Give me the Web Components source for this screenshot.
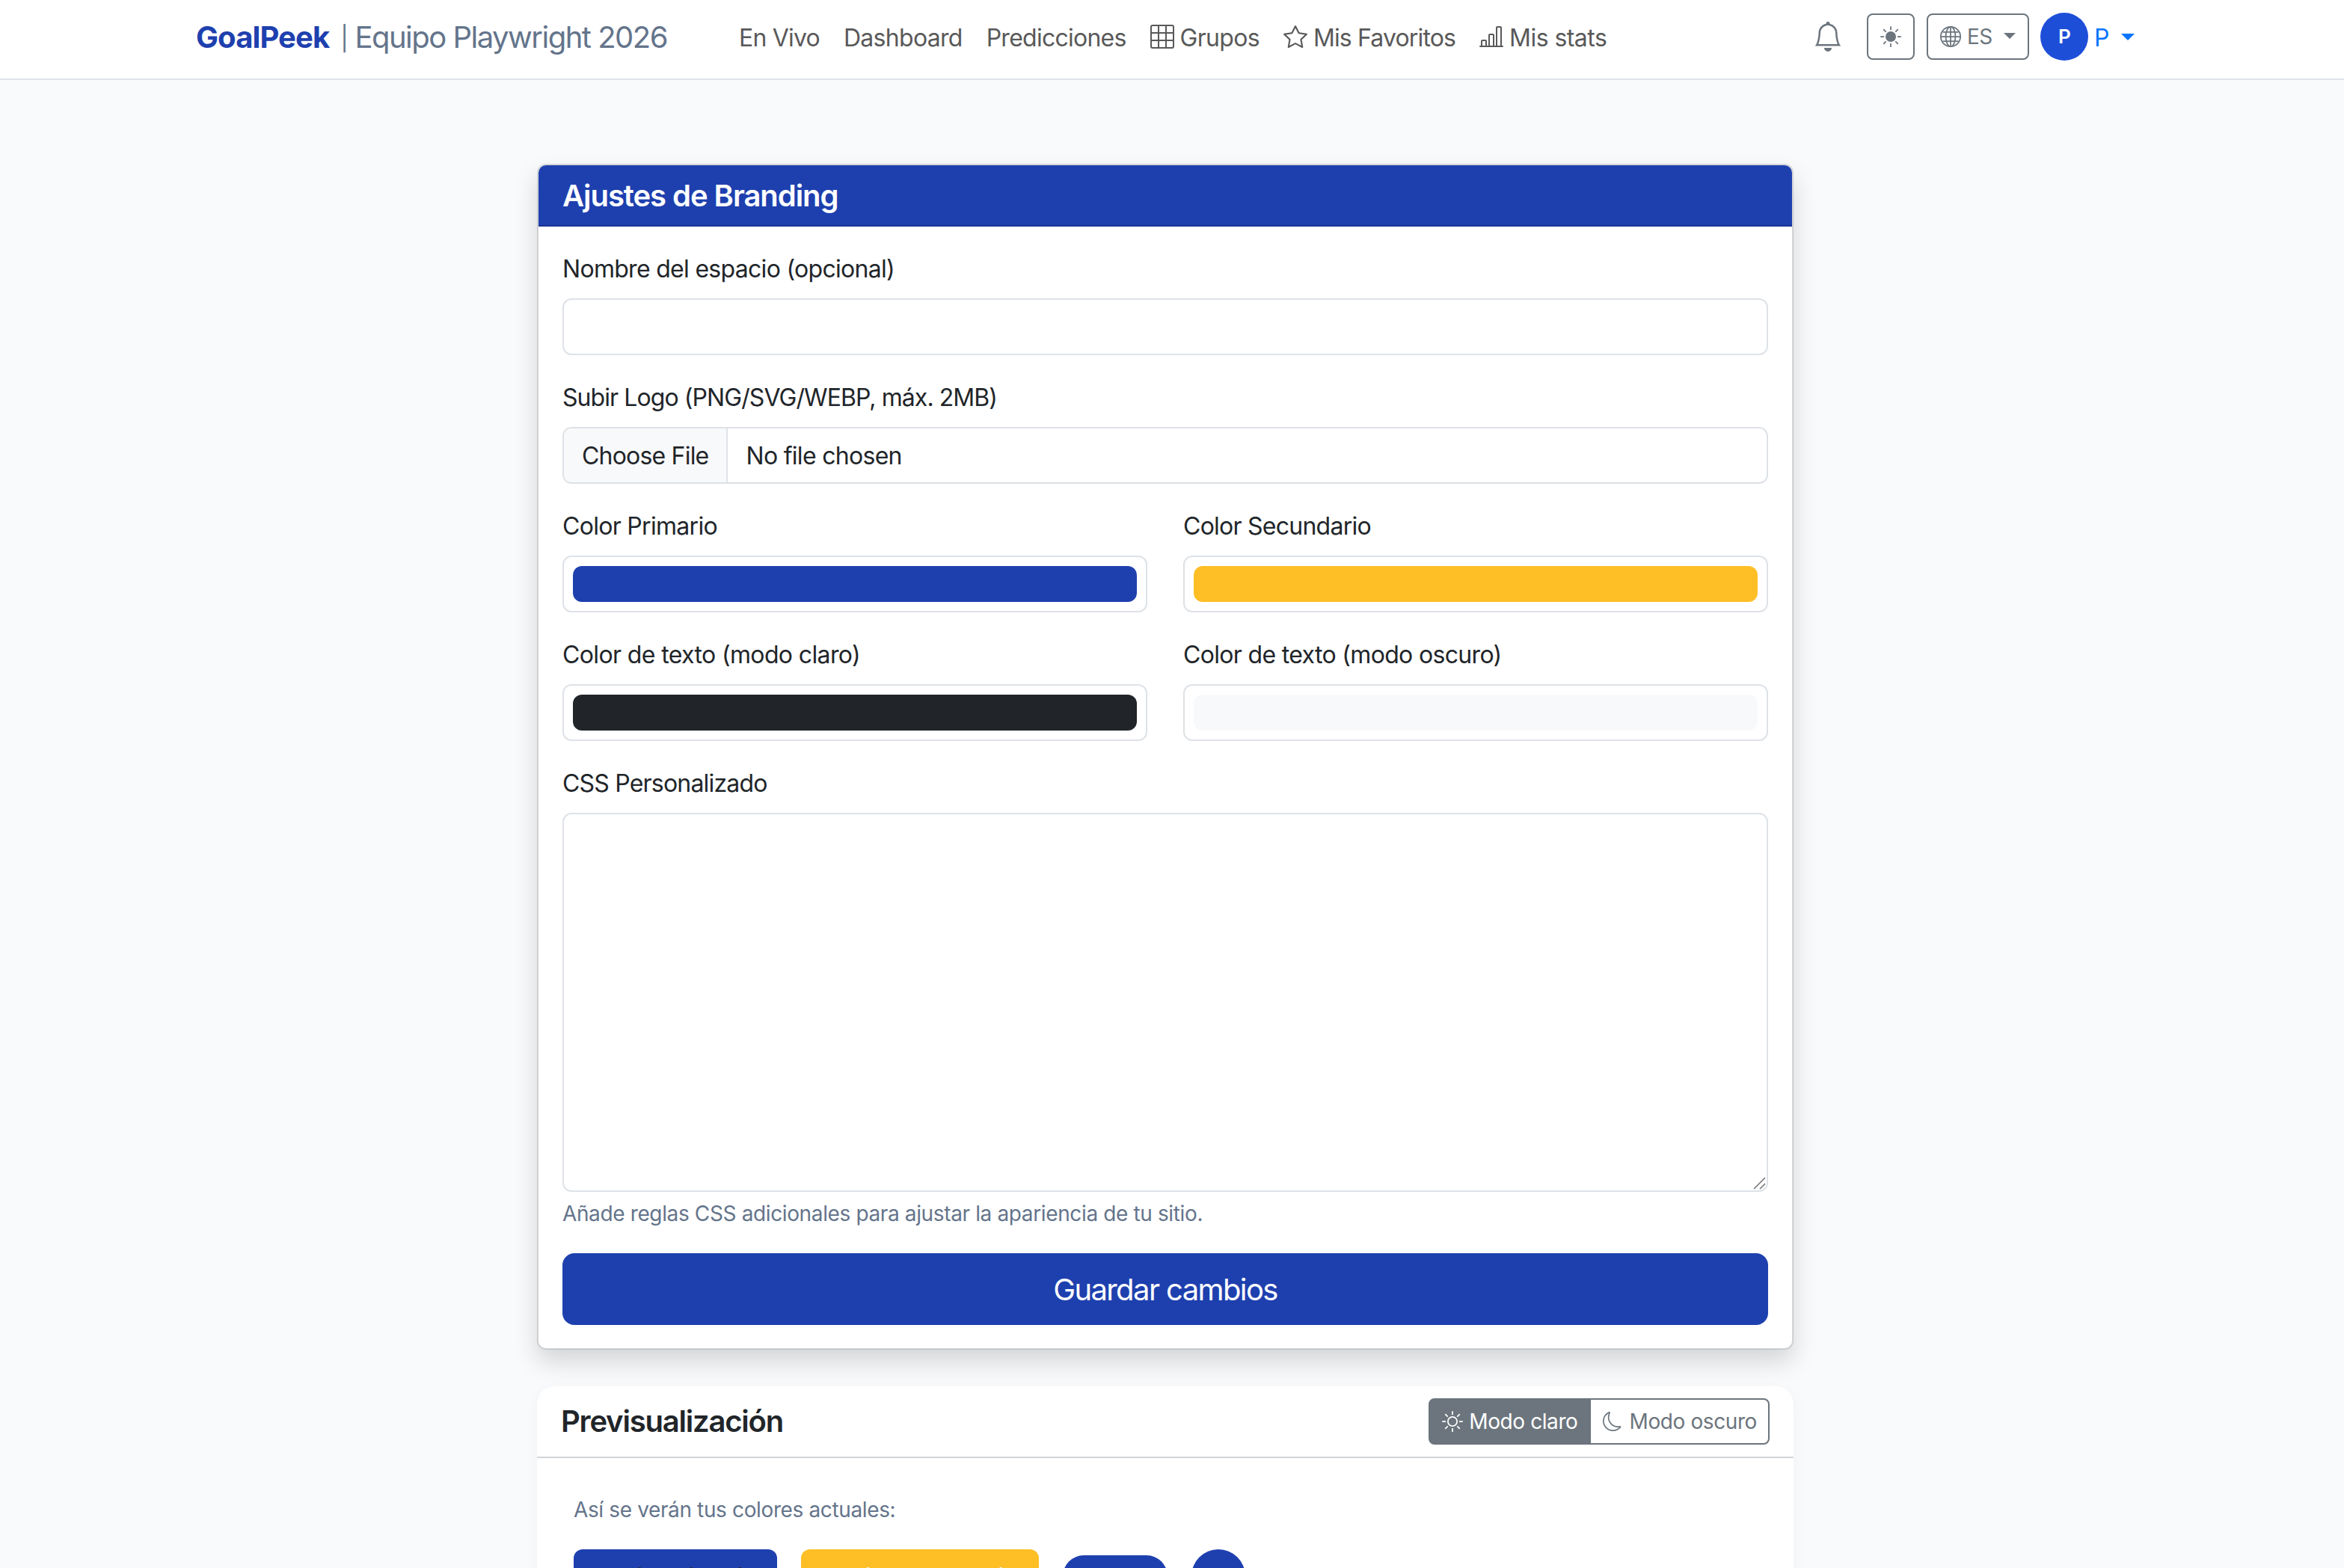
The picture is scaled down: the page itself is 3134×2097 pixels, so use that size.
<!DOCTYPE html>
<html lang="es">
<head>
    <meta charset="utf-8">
    <title>GoalPeek | Ajustes de Branding</title>
    <style>
        html, body {
            margin: 0;
            height: 100%;
            overflow: hidden;
        }

        body {
            --primary: #1e40af;
            --secondary: #febf26;
            --muted: #64748b;
            --gray: #6c757d;
            --border: #dee2e6;
            background-color: #f8fafc;
            color: #212529;
            font-family: Inter, "Liberation Sans", sans-serif;
            font-size: 32px;
            line-height: 48px;
            letter-spacing: -0.7px;
        }

        main {
            display: flex;
            flex-direction: column;
            gap: 49px;
            width: 1680px;
            margin: 112px 0 0 718px;
        }

        .row {
            display: grid;
            grid-template-columns: 1fr 1fr;
            gap: 48px;
        }
    </style>
</head>
<body>
    <main-navbar></main-navbar>
    <main>
        <settings-card>
            <span slot="title">Ajustes de Branding</span>
            <form-field label="Nombre del espacio (opcional)"></form-field>
            <form-field label="Subir Logo (PNG/SVG/WEBP, máx. 2MB)" type="file" tracking="-0.92px"></form-field>
            <div class="row">
                <form-field label="Color Primario" type="color" value="#1e40af"></form-field>
                <form-field label="Color Secundario" type="color" value="#febf26" tracking="-0.75px"></form-field>
            </div>
            <div class="row">
                <form-field label="Color de texto (modo claro)" type="color" value="#212529" tracking="-0.63px"></form-field>
                <form-field label="Color de texto (modo oscuro)" type="color" value="#f8f9fa" tracking="-0.67px"></form-field>
            </div>
            <form-field label="CSS Personalizado" type="textarea" tracking="-0.8px">Añade reglas CSS adicionales para ajustar la apariencia de tu sitio.</form-field>
            <save-button>Guardar cambios</save-button>
        </settings-card>
        <preview-card></preview-card>
    </main>

    <script>
        const icons = {
            grid: '<path d="M0 1.5A1.5 1.5 0 0 1 1.5 0h13A1.5 1.5 0 0 1 16 1.5v13a1.5 1.5 0 0 1-1.5 1.5h-13A1.5 1.5 0 0 1 0 14.5zM1.5 1a.5.5 0 0 0-.5.5V5h4V1zM5 6H1v4h4zm1 4h4V6H6zm-1 1H1v3.5a.5.5 0 0 0 .5.5H5zm1 0v4h4v-4zm5 0v4h3.5a.5.5 0 0 0 .5-.5V11zm0-1h4V6h-4zm0-5h4V1.5a.5.5 0 0 0-.5-.5H11zm-1 0V1H6v4z"/>',
            star: '<path d="M2.866 14.85c-.078.444.36.791.746.593l4.39-2.256 4.389 2.256c.386.198.824-.149.746-.592l-.83-4.73 3.522-3.356c.33-.314.16-.888-.282-.95l-4.898-.696L8.465.792a.513.513 0 0 0-.927 0L5.354 5.12l-4.898.696c-.441.062-.612.636-.283.95l3.523 3.356-.83 4.73zm4.905-2.767-3.686 1.894.694-3.957a.56.56 0 0 0-.163-.505L1.71 6.745l4.052-.576a.53.53 0 0 0 .393-.288L8 2.223l1.847 3.658a.53.53 0 0 0 .393.288l4.052.575-2.906 2.77a.56.56 0 0 0-.163.506l.694 3.957-3.686-1.894a.5.5 0 0 0-.461 0z"/>',
            bars: '<path d="M11 2a1 1 0 0 1 1-1h2a1 1 0 0 1 1 1v12h.5a.5.5 0 0 1 0 1H.5a.5.5 0 0 1 0-1H1v-3a1 1 0 0 1 1-1h2a1 1 0 0 1 1 1v3h1V7a1 1 0 0 1 1-1h2a1 1 0 0 1 1 1v7h1zm1 12h2V2h-2zm-3 0V7H7v7zm-5 0v-3H2v3z"/>',
            bell: '<path d="M8 16a2 2 0 0 0 2-2H6a2 2 0 0 0 2 2M8 1.918l-.797.161A4 4 0 0 0 4 6c0 .628-.134 2.197-.459 3.742-.16.767-.376 1.566-.663 2.258h10.244c-.287-.692-.502-1.49-.663-2.258C12.134 8.197 12 6.628 12 6a4 4 0 0 0-3.203-3.92zM14.22 12c.223.447.481.801.78 1H1c.299-.199.557-.553.78-1C2.68 10.2 3 6.88 3 6c0-2.42 1.72-4.44 4.005-4.901a1 1 0 1 1 1.99 0A5 5 0 0 1 13 6c0 .88.32 4.2 1.22 6"/>',
            sunFill: '<circle cx="8" cy="8" r="4"/><g fill="none" stroke="currentColor" stroke-linecap="round"><path d="M8 .5v2M8 13.5v2M.5 8h2M13.5 8h2M2.7 2.7l1.4 1.4M11.9 11.9l1.4 1.4M2.7 13.3l1.4-1.4M11.9 4.1l1.4-1.4"/></g>',
            sun: '<g fill="none" stroke="currentColor" stroke-linecap="round"><circle cx="8" cy="8" r="3.5"/><path d="M8 .5v2M8 13.5v2M.5 8h2M13.5 8h2M2.7 2.7l1.4 1.4M11.9 11.9l1.4 1.4M2.7 13.3l1.4-1.4M11.9 4.1l1.4-1.4"/></g>',
            moon: '<path d="M6 .278a.77.77 0 0 1 .08.858 7.2 7.2 0 0 0-.878 3.46c0 4.021 3.278 7.277 7.318 7.277q.792-.001 1.533-.16a.79.79 0 0 1 .81.316.73.73 0 0 1-.031.893A8.35 8.35 0 0 1 8.344 16C3.734 16 0 12.286 0 7.71 0 4.266 2.114 1.312 5.124.06A.75.75 0 0 1 6 .278M4.858 1.311A7.27 7.27 0 0 0 1.025 7.71c0 4.02 3.279 7.276 7.319 7.276a7.32 7.32 0 0 0 5.205-2.162q-.506.063-1.029.063c-4.61 0-8.343-3.714-8.343-8.29 0-1.167.242-2.278.681-3.286"/>',
            globe: '<g fill="none" stroke="currentColor"><circle cx="8" cy="8" r="7.5"/><ellipse cx="8" cy="8" rx="3.7" ry="7.5"/><path d="M8 .5v15M.5 8h15M2 4.5h12M2 11.5h12"/></g>'
        };

        class UiIcon extends HTMLElement {
            connectedCallback() {
                const size = this.getAttribute('size') || 32;
                this.attachShadow({ mode: 'open' }).innerHTML = `
                    <style>
                        :host { display: block; flex: none; width: ${size}px; height: ${size}px; }
                        svg { display: block; width: 100%; height: 100%; }
                    </style>
                    <svg viewBox="0 0 16 16" fill="currentColor">${icons[this.getAttribute('name')]}</svg>
                `;
            }
        }

        class NavLink extends HTMLElement {
            connectedCallback() {
                const icon = this.getAttribute('icon');
                this.attachShadow({ mode: 'open' }).innerHTML = `
                    <style>
                        :host {
                            display: flex;
                            align-items: center;
                            gap: 8px;
                            color: #595959;
                            white-space: nowrap;
                            cursor: pointer;
                        }
                        ui-icon { margin-top: -3px; }
                    </style>
                    ${icon ? `<ui-icon name="${icon}"></ui-icon>` : ''}<span><slot></slot></span>
                `;
            }
        }

        class MainNavbar extends HTMLElement {
            constructor() {
                super();
                this.attachShadow({ mode: 'open' }).innerHTML = `
                    <style>
                        :host {
                            display: block;
                            height: 105px;
                            background-color: white;
                            border-bottom: 2px solid #dfe3ea;
                        }
                        nav {
                            display: flex;
                            align-items: center;
                            width: 2592px;
                            height: 98px;
                            margin-left: 262px;
                            white-space: nowrap;
                        }
                        .brand {
                            display: flex;
                            gap: 15px;
                            width: 726px;
                            font-size: 40px;
                            line-height: 60px;
                            padding-top: 3px;
                        }
                        .brand b {
                            color: var(--primary);
                            letter-spacing: -0.9px;
                        }
                        .brand span {
                            color: var(--muted);
                            letter-spacing: -1.5px;
                        }
                        .brand small {
                            margin-right: 10px;
                            font-size: 32px;
                            vertical-align: 1px;
                        }
                        .links {
                            display: flex;
                            gap: 32px;
                            padding-top: 3px;
                        }
                        .tools {
                            display: flex;
                            align-items: center;
                            margin-left: auto;
                            color: var(--gray);
                        }
                        .button {
                            box-sizing: border-box;
                            display: flex;
                            align-items: center;
                            height: 62px;
                            padding: 0 16px;
                            border: 2px solid var(--gray);
                            border-radius: 8px;
                            font-size: 28px;
                        }
                        .theme { margin: 0 16px 0 32px; }
                        .lang { width: 137px; }
                        .lang span { margin-left: 8px; letter-spacing: -0.5px; }
                        .caret {
                            border-top: 8px solid;
                            border-left: 8px solid transparent;
                            border-right: 8px solid transparent;
                            margin: -2px 0 0 auto;
                        }
                        .avatar {
                            display: flex;
                            align-items: center;
                            justify-content: center;
                            width: 64px;
                            height: 64px;
                            margin: 0 8px 0 15px;
                            border-radius: 50%;
                            background-color: #1d4ed8;
                            color: white;
                            font-size: 26px;
                            font-weight: 600;
                        }
                        .user {
                            display: flex;
                            align-items: center;
                            width: 54px;
                            padding-top: 3px;
                            color: #0a74ff;
                        }
                        .user .caret { border-width: 9px 9px 0; }
                    </style>
                    <nav>
                        <div class="brand"><b>GoalPeek</b><span><small>|</small>Equipo Playwright 2026</span></div>
                        <div class="links">
                            <nav-link style="letter-spacing: -0.8px">En Vivo</nav-link>
                            <nav-link>Dashboard</nav-link>
                            <nav-link style="letter-spacing: -0.75px">Predicciones</nav-link>
                            <nav-link icon="grid">Grupos</nav-link>
                            <nav-link icon="star" style="letter-spacing: -0.85px">Mis Favoritos</nav-link>
                            <nav-link icon="bars" style="letter-spacing: -0.55px">Mis stats</nav-link>
                        </div>
                        <div class="tools">
                            <ui-icon name="bell" size="40"></ui-icon>
                            <div class="button theme"><ui-icon name="sunFill" size="28"></ui-icon></div>
                            <div class="button lang"><ui-icon name="globe" size="28"></ui-icon><span>ES</span><i class="caret"></i></div>
                            <div class="avatar">P</div>
                            <div class="user">P<i class="caret"></i></div>
                        </div>
                    </nav>
                `;
            }
        }

        class SettingsCard extends HTMLElement {
            constructor() {
                super();
                this.attachShadow({ mode: 'open' }).innerHTML = `
                    <style>
                        :host {
                            display: block;
                            border: 2px solid rgba(0, 0, 0, 0.13);
                            border-radius: 12px;
                            background-color: white;
                            background-clip: padding-box;
                            box-shadow: 0 16px 32px rgba(0, 0, 0, 0.15);
                        }
                        header {
                            padding: 17px 32px 15px;
                            border-bottom: 2px solid rgba(0, 0, 0, 0.176);
                            border-radius: 10px 10px 0 0;
                            background-color: var(--primary);
                            color: white;
                            font-size: 40px;
                            font-weight: 600;
                            letter-spacing: -1.05px;
                        }
                        section {
                            display: flex;
                            flex-direction: column;
                            gap: 32px;
                            padding: 32px 32px 31px;
                        }
                    </style>
                    <header><slot name="title"></slot></header>
                    <section><slot></slot></section>
                `;
            }
        }

        class FormField extends HTMLElement {
            connectedCallback() {
                this.attachShadow({ mode: 'open' }).innerHTML = `
                    <style>
                        :host { display: block; }
                        label {
                            display: block;
                            padding-top: 1px;
                            margin-bottom: 15px;
                            letter-spacing: ${this.getAttribute('tracking') || 'inherit'};
                        }
                        .control {
                            box-sizing: border-box;
                            position: relative;
                            display: flex;
                            height: 76px;
                            border: 2px solid var(--border);
                            border-radius: 12px;
                            background-color: white;
                            overflow: hidden;
                        }
                        .file span { padding: 13px 24px 11px; }
                        .file span:first-child {
                            background-color: #f8f9fa;
                            border-right: 2px solid var(--border);
                            letter-spacing: -0.8px;
                        }
                        .color { padding: 12px; }
                        .color i { flex: 1; border-radius: 12px; background-color: ${this.getAttribute('value')}; }
                        .textarea { height: 507px; }
                        .grip {
                            position: absolute;
                            right: 1px;
                            bottom: 1px;
                            width: 17px;
                            height: 17px;
                        }
                        .help {
                            margin-top: 8px;
                            color: var(--muted);
                            font-size: 28px;
                            line-height: 42px;
                            letter-spacing: -0.37px;
                        }
                    </style>
                    <label>${this.getAttribute('label')}</label>
                    ${this.renderControl()}
                `;
            }

            renderControl() {
                switch (this.getAttribute('type')) {
                    case 'file':
                        return '<div class="control file"><span>Choose File</span><span>No file chosen</span></div>';
                    case 'color':
                        return '<div class="control color"><i></i></div>';
                    case 'textarea':
                        return `
                            <div class="control textarea">
                                <svg class="grip" viewBox="0 0 17 17" stroke="#777" stroke-width="1.6"><path d="M1 16 16 1M9 16l7-7"/></svg>
                            </div>
                            <div class="help"><slot></slot></div>
                        `;
                    default:
                        return '<div class="control"></div>';
                }
            }
        }

        class SaveButton extends HTMLElement {
            constructor() {
                super();
                this.attachShadow({ mode: 'open' }).innerHTML = `
                    <style>
                        :host {
                            display: block;
                            padding: 19px 32px 17px;
                            border-radius: 16px;
                            background-color: var(--primary);
                            color: white;
                            font-size: 40px;
                            line-height: 60px;
                            letter-spacing: -1.6px;
                            text-align: center;
                            cursor: pointer;
                        }
                    </style>
                    <slot></slot>
                `;
            }
        }

        class PreviewCard extends HTMLElement {
            constructor() {
                super();
                this.attachShadow({ mode: 'open' }).innerHTML = `
                    <style>
                        :host {
                            display: block;
                            border-radius: 24px;
                            background-color: white;
                            box-shadow: 0 4px 20px rgba(0, 0, 0, 0.04);
                        }
                        header {
                            display: flex;
                            align-items: center;
                            justify-content: space-between;
                            padding: 16px 32px;
                            border-bottom: 2px solid #d3d5d8;
                        }
                        h5 {
                            margin: 0;
                            font-size: 40px;
                            font-weight: 600;
                            letter-spacing: -1.2px;
                        }
                        .modes { display: flex; }
                        .modes div {
                            box-sizing: border-box;
                            display: flex;
                            align-items: center;
                            gap: 8px;
                            height: 62px;
                            padding: 0 15px 0 16px;
                            border: 2px solid var(--gray);
                            border-radius: 0 8px 8px 0;
                            color: var(--gray);
                            font-size: 28px;
                            letter-spacing: -0.4px;
                        }
                        .modes .active {
                            border-radius: 8px 0 0 8px;
                            margin-right: -2px;
                            background-color: var(--gray);
                            color: white;
                        }
                        .modes ui-icon[name="moon"] { margin-right: 2px; }
                        section { padding: 48px 49px; }
                        p {
                            margin: 0 0 32px;
                            color: var(--muted);
                            font-size: 28px;
                            line-height: 42px;
                            letter-spacing: -0.37px;
                        }
                        .samples {
                            display: flex;
                            align-items: center;
                            gap: 32px;
                        }
                        .sample {
                            box-sizing: border-box;
                            width: 272px;
                            height: 72px;
                            padding-top: 2px;
                            border-radius: 12px;
                            background-color: var(--primary);
                            font-weight: 500;
                            line-height: 72px;
                            letter-spacing: -0.5px;
                            text-align: center;
                        }
                        .secondary {
                            width: 318px;
                            background-color: var(--secondary);
                            color: #f8f9fa;
                        }
                        .badge {
                            width: 140px;
                            height: 56px;
                            border-radius: 28px;
                            background-color: var(--primary);
                        }
                        .dot {
                            width: 72px;
                            height: 72px;
                            border-radius: 50%;
                            background-color: var(--primary);
                        }
                    </style>
                    <header>
                        <h5>Previsualización</h5>
                        <div class="modes">
                            <div class="active"><ui-icon name="sun" size="28"></ui-icon><span>Modo claro</span></div>
                            <div><ui-icon name="moon" size="26"></ui-icon><span>Modo oscuro</span></div>
                        </div>
                    </header>
                    <section>
                        <p>Así se verán tus colores actuales:</p>
                        <div class="samples">
                            <div class="sample">Botón primario</div>
                            <div class="sample secondary">Botón secundario</div>
                            <div class="badge"></div>
                            <div class="dot"></div>
                        </div>
                    </section>
                `;
            }
        }

        customElements.define('ui-icon', UiIcon);
        customElements.define('nav-link', NavLink);
        customElements.define('main-navbar', MainNavbar);
        customElements.define('form-field', FormField);
        customElements.define('save-button', SaveButton);
        customElements.define('settings-card', SettingsCard);
        customElements.define('preview-card', PreviewCard);
    </script>
</body>
</html>
